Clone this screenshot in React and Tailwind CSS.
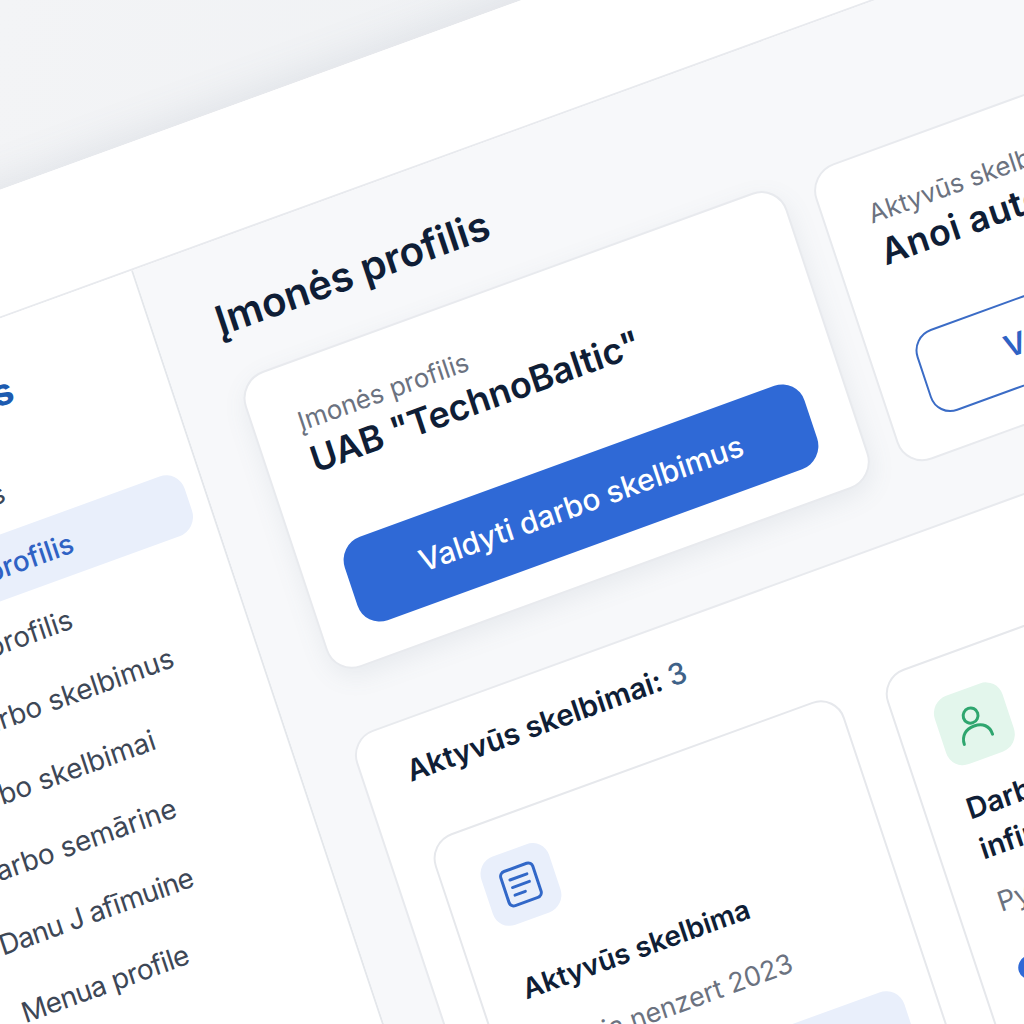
import React from "react";

const sans = "font-['Inter','Liberation_Sans',sans-serif]";

function Row({ children, active }) {
  return (
    <div className={active
      ? "flex h-[63px] items-center rounded-[20px] bg-[#e9effb] pl-[20px] text-[28px] font-medium text-[#2f62c4]"
      : "flex h-[63px] items-center pl-[20px] text-[28px] text-[#3d4756]"}>
      {children}
    </div>
  );
}

function DocIcon() {
  return (
    <svg width="44" height="44" viewBox="0 0 44 44" fill="none" stroke="#3268c8" strokeWidth="3" strokeLinecap="round" strokeLinejoin="round">
      <rect x="5" y="4" width="34" height="36" rx="5" />
      <path d="M13 14h18M13 22h18M13 30h11" />
    </svg>
  );
}

function UserIcon() {
  return (
    <svg width="44" height="44" viewBox="0 0 44 44" fill="none" stroke="#2fa66f" strokeWidth="3" strokeLinecap="round">
      <circle cx="21" cy="13" r="7.5" />
      <path d="M6 38c0-9 6-14 15-14s15 5 15 14" />
    </svg>
  );
}

export default function App() {
  return (
    <div className={`h-[1024px] w-[1024px] overflow-hidden bg-[linear-gradient(100deg,#f3f4f6,#eceff2)] ${sans}`}>
      <div className="flex h-[1700px] w-[2000px] origin-top-left flex-col bg-white shadow-[0_-6px_40px_rgba(100,116,139,0.12)] [transform:matrix(0.94,-0.342,0.316,0.949,-300,299)]">
        <header className="h-[121px] shrink-0 border-b-2 border-[#e8eaee] bg-white" />
        <div className="flex flex-1">
          <aside className="w-[420px] shrink-0 border-r-2 border-[#e4e7eb] bg-white pl-[60px] pr-[18px]">
            <div className="flex h-[132px] items-start pl-[20px] pt-[48px] text-[37px] leading-[44px] font-bold text-[#1d5bb0]">Skelbimus</div>
            <div className="flex flex-col gap-2">
              <Row>Kandidatas</Row>
              <Row active>Įmonės profilis</Row>
              <Row>Mano profilis</Row>
              <Row>Iki darbo skelbimus</Row>
              <Row>Darbo skelbimai</Row>
              <Row>Darbo semārine</Row>
              <Row><span className="tracking-[-0.8px]">Danu J afīmuine</span></Row>
              <Row><span className="tracking-[-0.5px]">Menua profile</span></Row>
            </div>
          </aside>
          <main className="flex-1 bg-[#f7f8fa] pl-[63px]">
            <h1 className="pt-[54px] text-[40.5px] leading-[48px] font-semibold text-[#0f1e36]">Įmonės profilis</h1>
            <div className="mt-[37px] flex gap-[30px]">
              <section className="h-[312px] w-[577px] shrink-0 rounded-[28px] border-2 border-[#e8eaee] bg-white pl-[42px] pr-[42px] pt-[44px] shadow-[0_8px_24px_rgba(100,116,139,0.1)]">
                <p className="pl-[2px] text-[26px] leading-[30px] text-[#6b7280]">Įmonės profilis</p>
                <p className="mt-[3px] pl-[2px] text-[36px] leading-[44px] font-semibold text-[#0f1e36]">UAB "TechnoBaltic"</p>
                <div className="mt-[66px] flex h-[88px] items-center justify-center rounded-[24px] bg-[#2f69d6] text-[30px] font-medium text-white">Valdyti darbo skelbimus</div>
              </section>
              <section className="h-[312px] w-[577px] shrink-0 rounded-[28px] border-2 border-[#e8eaee] bg-white pl-[44px] pr-[42px] pt-[44px]">
                <p className="text-[26px] leading-[30px] text-[#6b7280]">Aktyvūs skelbimai</p>
                <p className="mt-[3px] text-[36px] leading-[44px] font-semibold tracking-[0.7px] text-[#0f1e36]">Anoi autorius</p>
                <div className="mt-[66px] flex h-[86px] items-center justify-center rounded-[22px] border-2 border-[#3b6cc6] pl-[26px] text-[30px] font-semibold text-[#2f62c4]">Valdyti visus skelbimus</div>
              </section>
            </div>
            <section className="-ml-[7px] mt-[63px] h-[900px] rounded-[26px] border-2 border-[#e8eaee] bg-white pl-[40px] pt-[31px]">
              <p className="pl-[4px] text-[29.5px] leading-[36px] font-semibold text-[#0f1e36]">
                Aktyvūs skelbimai: <span className="font-medium text-[#3f6288]">3</span>
              </p>
              <div className="mt-[55px] flex gap-[45px]">
                <article className="h-[420px] w-[436px] shrink-0 rounded-[26px] border-2 border-[#e6e8ec] bg-white pl-[38px] pr-[32px] pt-[34px]">
                  <div className="flex h-[72px] w-[72px] items-center justify-center rounded-[18px] bg-[#e9effb]"><DocIcon /></div>
                  <p className="ml-[5px] mt-[46px] text-[28px] leading-[36px] font-semibold text-[#0f1e36]">Aktyvūs skelbima</p>
                  <p className="ml-[3px] mt-[30px] text-[27px] leading-[36px] text-[#6b7280]">Galioja nenzert 2023</p>
                  <div className="mt-[40px] h-[80px] rounded-[20px] bg-[#e9effb]" />
                </article>
                <article className="h-[420px] w-[442px] shrink-0 rounded-[26px] border-2 border-[#e6e8ec] bg-white pl-[38px] pt-[38px]">
                  <div className="flex h-[72px] w-[72px] items-center justify-center rounded-[18px] bg-[#e3f6ec]"><UserIcon /></div>
                  <p className="ml-[2px] mt-[22px] text-[29px] leading-[42px] font-semibold text-[#0f1e36]">Darbo skelbimo<br />infirmacija</p>
                  <p className="ml-[2px] mt-[16px] text-[27.5px] leading-[36px] text-[#6b7280]">Pyktis</p>
                  <div className="mt-[42px] h-[24px] w-[24px] rounded-full bg-[#2f69d6]" />
                </article>
              </div>
            </section>
          </main>
        </div>
      </div>
    </div>
  );
}
